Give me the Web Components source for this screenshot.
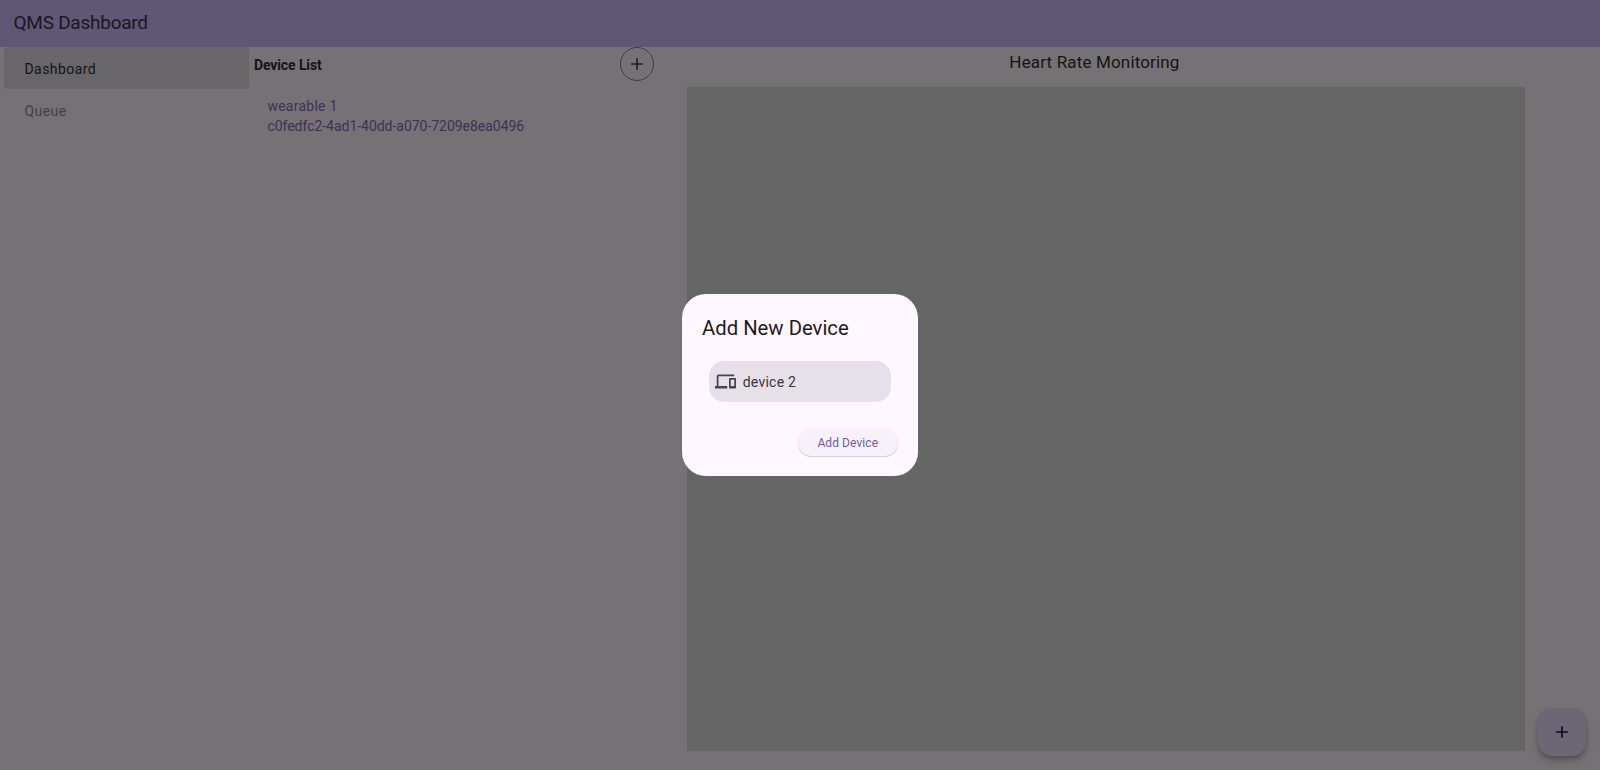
<!DOCTYPE html>
<html lang="en">
<head>
<meta charset="utf-8">
<title>QMS Dashboard</title>
<style>
html,body{margin:0;height:100%;overflow:hidden;background:#757175;font-family:Roboto,sans-serif}
</style>
</head>
<body>
<qms-app></qms-app>
<script>
const define = (name, html) => customElements.define(name, class extends HTMLElement {
  constructor() {
    super();
    const t = document.createElement('template');
    t.innerHTML = html;
    this.attachShadow({ mode: 'open' }).append(t.content.cloneNode(true));
  }
});

define('qms-bar', `<style>
:host{display:flex;align-items:center;box-sizing:border-box;height:47px;padding:0 13.5px 2px;background:#605675;color:#1a181e;font-size:19px;letter-spacing:-.25px}
</style><slot></slot>`);

define('qms-nav-item', `<style>
:host{display:flex;align-items:center;box-sizing:border-box;height:42.4px;padding:1px 0 0 20.5px;border-radius:4px;font-size:14px;letter-spacing:.43px;color:#434244}
:host([selected]){background:#686668;color:#151416}
</style><slot></slot>`);

define('qms-plus', `<style>:host{display:block;width:20px;height:20px}svg{display:block}</style>
<svg width="20" height="20" viewBox="0 0 24 24" fill="currentColor"><path d="M19 13h-6v6h-2v-6H5v-2h6V5h2v6h6z"/></svg>`);

define('qms-device', `<style>
:host{display:block;padding-left:13.5px;font-size:14px;line-height:20.3px;color:#3b3256}
.name{letter-spacing:.25px}.id{letter-spacing:-.03px}
</style><div class="name"><slot name="name"></slot></div><div class="id"><slot></slot></div>`);

define('qms-device-list', `<style>
:host{display:block}
header{display:flex;align-items:center;justify-content:space-between;height:34px;margin-bottom:15px}
h2{margin:0;padding-top:1px;font-size:14px;font-weight:700;letter-spacing:-.1px;color:#151416}
.add{display:flex;align-items:center;justify-content:center;box-sizing:border-box;width:34px;height:34px;border:1px solid #403e42;border-radius:50%;color:#201f22}
</style><header><h2>Device List</h2><div class="add"><qms-plus></qms-plus></div></header><slot></slot>`);

define('qms-chart', `<style>
:host{display:flex;flex-direction:column}
h1{margin:0 0 0 -24px;height:39.6px;line-height:30px;text-align:center;font-size:17px;font-weight:400;letter-spacing:.16px;color:#151416}
.plot{height:664.4px;background:#656565}
</style><h1><slot></slot></h1><div class="plot"></div>`);

define('qms-fab', `<style>
:host{display:flex;align-items:center;justify-content:center;position:fixed;right:14px;bottom:14px;width:48px;height:48px;border-radius:14px;background:#6c6675;color:#0f0a22;box-shadow:0 3px 5px -1px rgba(0,0,0,.25),0 5px 9px rgba(0,0,0,.15)}
</style><qms-plus></qms-plus>`);

define('qms-choice', `<style>
:host{display:flex;align-items:center;gap:6.5px;box-sizing:border-box;height:40.5px;margin:0 6.7px;padding-left:6.5px;border-radius:15px;background:#e6e0e9;color:#49454f;font-size:14px;letter-spacing:.25px}
svg{display:block}span{padding-top:1px;color:#39363e}
</style><svg width="21" height="21" viewBox="0 0 24 24" fill="currentColor"><path d="M4 6h18V4H4c-1.1 0-2 .9-2 2v11H0v3h14v-3H4V6zm19 2h-6c-.55 0-1 .45-1 1v10c0 .55.45 1 1 1h6c.55 0 1-.45 1-1V9c0-.55-.45-1-1-1zm-1 9h-4v-7h4v7z"/></svg><span><slot></slot></span>`);

define('qms-button', `<style>
:host{display:flex;align-items:center;justify-content:center;box-sizing:border-box;width:100.5px;height:27px;padding-top:1px;border-radius:14px;background:#f7f2fa;color:#6f5aa8;font-size:12px;font-weight:400;letter-spacing:.08px;box-shadow:0 1px 1px rgba(0,0,0,.18),0 0 1px rgba(0,0,0,.06)}
</style><slot></slot>`);

define('qms-dialog', `<style>
:host{display:flex;align-items:center;justify-content:center;position:fixed;inset:0;padding-bottom:.5px}
.panel{box-sizing:border-box;width:236.6px;height:182.5px;padding:20px 20.3px;border-radius:24px;background:#fef7ff}
h2{margin:0;height:47.5px;line-height:28px;font-size:20.3px;font-weight:400;color:#1d1b20}
footer{display:flex;justify-content:flex-end;margin-top:27px}
</style><div class="panel"><h2><slot name="title"></slot></h2><slot></slot><footer><slot name="action"></slot></footer></div>`);

define('qms-app', `<style>
:host{display:block;height:100vh;background:#757175}
main{display:grid;grid-template-columns:245.4px 404.9px 838px;padding-left:4px}
qms-device-list{margin-left:4.5px}qms-chart{margin-left:33.2px;margin-right:-33.2px}
</style>
<qms-bar>QMS Dashboard</qms-bar>
<main><nav><qms-nav-item selected>Dashboard</qms-nav-item><qms-nav-item>Queue</qms-nav-item></nav>
<qms-device-list><qms-device><span slot="name">wearable 1</span>c0fedfc2-4ad1-40dd-a070-7209e8ea0496</qms-device></qms-device-list>
<qms-chart>Heart Rate Monitoring</qms-chart></main>
<qms-fab></qms-fab>
<qms-dialog><span slot="title">Add New Device</span><qms-choice>device 2</qms-choice><qms-button slot="action">Add Device</qms-button></qms-dialog>`);
</script>
</body>
</html>
